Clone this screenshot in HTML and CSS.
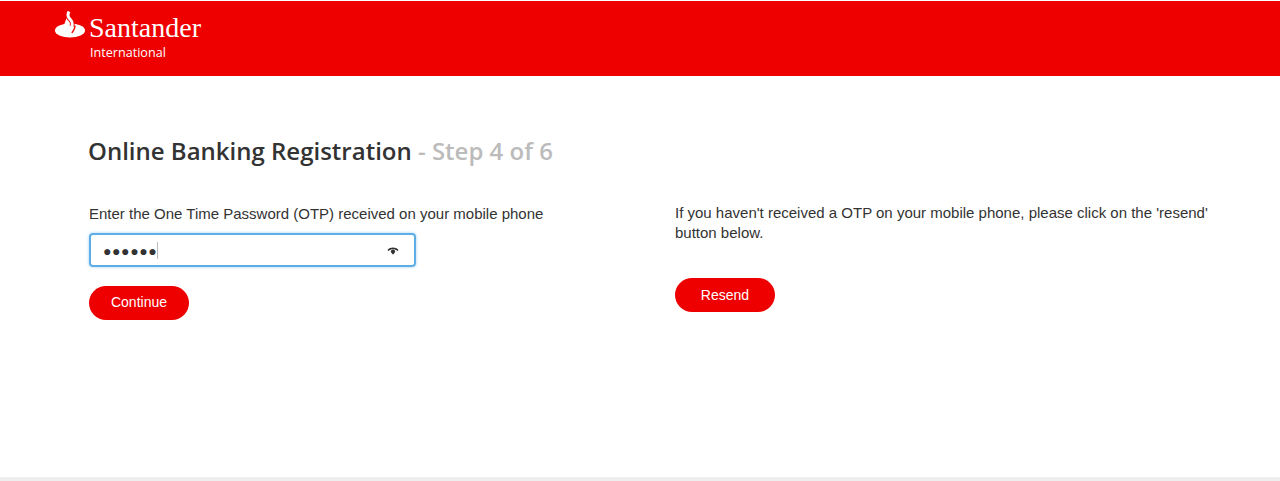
FILE: index.html
```html
<!DOCTYPE html>
<html lang="en">
  <head>
    <meta charset="utf-8" />
    <title>Online Banking Registration</title>
    <link rel="stylesheet" href="styles.css">
  </head>
  <body>
    <header class="top-bar">
      <div class="logo">
        <svg class="logo-flame" viewBox="0 0 30 27" width="30" height="27" aria-hidden="true">
          <ellipse cx="15" cy="19.500" rx="15" ry="7" fill="#fff"/>
          <path d="M8.500 17C8.800 13 10.800 10.500 11.500 6.500c1.500 3.500 6.500 5 8 9 0.800 2.500-0.500 4.500-3 7.500L9 21z" fill="#fff"/>
          <path d="M19.800 14.500c0.700 2.500-0.800 4.500-3 7.500" fill="none" stroke="#ee0000" stroke-width="1.400"/>
          <path d="M14 1c-1.500 2.800-1.700 4.200 0.300 6.300 2 2 3.700 3.400 2.700 7.700" fill="none" stroke="#ee0000" stroke-width="4.800"/>
          <path d="M14 0.500c-1.500 2.800-1.700 4.700 0.300 6.800 2 2 3.700 3.400 2.700 7.700" fill="none" stroke="#fff" stroke-width="3"/>
        </svg>
        <div class="logo-text">
          <span class="logo-name">Santander</span>
          <span class="logo-sub">International</span>
        </div>
      </div>
    </header>

    <main class="content">
      <h1 class="page-title">Online Banking Registration <span class="step">- Step 4 of 6</span></h1>
      <div class="columns">
        <section class="col-left">
          <label class="field-label" for="otp">Enter the One Time Password (OTP) received on your mobile phone</label>
          <div class="otp-box">
            <span class="otp-dots">●●●●●●</span><span class="caret"></span>
            <svg class="eye" viewBox="0 0 12 8" width="12" height="8" aria-hidden="true">
              <path d="M0.500 3C2 1.200 4 0.500 6 0.500s4 0.700 5.500 2.500l-1 1C9.200 2.800 7.600 2.200 6 2.200S2.800 2.800 1.500 4z" fill="#333"/>
              <circle cx="6" cy="4.500" r="2.100" fill="#333"/>
              <path d="M4.500 5.800h3L6 7.800z" fill="#333"/>
            </svg>
          </div>
          <button class="btn" id="continueBtn">Continue</button>
        </section>
        <section class="col-right">
          <p class="resend-text">If you haven't received a OTP on your mobile phone, please click on the 'resend' button below.</p>
          <button class="btn" id="resendBtn">Resend</button>
        </section>
      </div>
    </main>

    <footer class="bottom-line"></footer>
  </body>
</html>
```

FILE: styles.css
```css
html,
body {
  height: 100%;
}

body {
  margin: 0;
  display: flex;
  flex-direction: column;
  background-color: white;
  color: #333;
  font-family: "Liberation Sans", Arial, sans-serif;
  font-size: 15px;
  overflow: hidden;
}

/* top bar */
.top-bar {
  flex: none;
  height: 75px;
  margin-top: 1px;
  padding: 10px 0 0 55px;
  box-sizing: border-box;
  background-color: #ee0000;
}

.logo {
  display: flex;
  color: white;
}

.logo-text {
  display: flex;
  flex-direction: column;
  margin-left: 4px;
}

.logo-name {
  font-family: "Liberation Serif", serif;
  font-size: 28px;
  line-height: 33px;
}

.logo-sub {
  font-family: "Open Sans", sans-serif;
  font-size: 12.600px;
  line-height: 16px;
  margin-top: 1px;
  margin-left: 1px;
}

/* content */
.content {
  flex: 1;
  padding: 58px 0 0 88px;
}

.page-title {
  margin: 0;
  font-family: "Open Sans", sans-serif;
  font-size: 24px;
  font-weight: 600;
  line-height: 34px;
  color: #333;
}

.step {
  color: #bbb;
}

.columns {
  display: flex;
  margin-top: 36px;
}

.col-left {
  width: 587px;
  padding-left: 1px;
  box-sizing: border-box;
}

.col-right {
  width: 540px;
}

.field-label {
  display: block;
  line-height: 20px;
}

.otp-box {
  display: flex;
  align-items: center;
  width: 327px;
  height: 34px;
  margin-top: 9px;
  padding: 0 15px 0 12px;
  box-sizing: border-box;
  border: 2px solid #5dade6;
  border-radius: 4px;
  box-shadow: 0 0 3px rgba(93, 173, 230, 0.6);
}

.otp-dots {
  font-size: 14px;
  letter-spacing: 0.600px;
  line-height: 20px;
  padding-top: 2px;
  color: #333;
}

.caret {
  width: 1px;
  height: 17px;
  background-color: #bbb;
}

.eye {
  margin-left: auto;
  margin-top: 2px;
}

.btn {
  display: block;
  width: 100px;
  height: 34px;
  margin-top: 19px;
  padding: 0;
  border: none;
  border-radius: 17px;
  background-color: #ee0000;
  color: white;
  font-family: inherit;
  font-size: 14px;
  cursor: pointer;
}

.col-left .btn {
  padding-bottom: 2px;
}

.resend-text {
  margin: -1px 0 0;
  line-height: 20px;
}

.col-right .btn {
  margin-top: 35px;
}

.bottom-line {
  flex: none;
  height: 4px;
  background-color: #eee;
}
```
